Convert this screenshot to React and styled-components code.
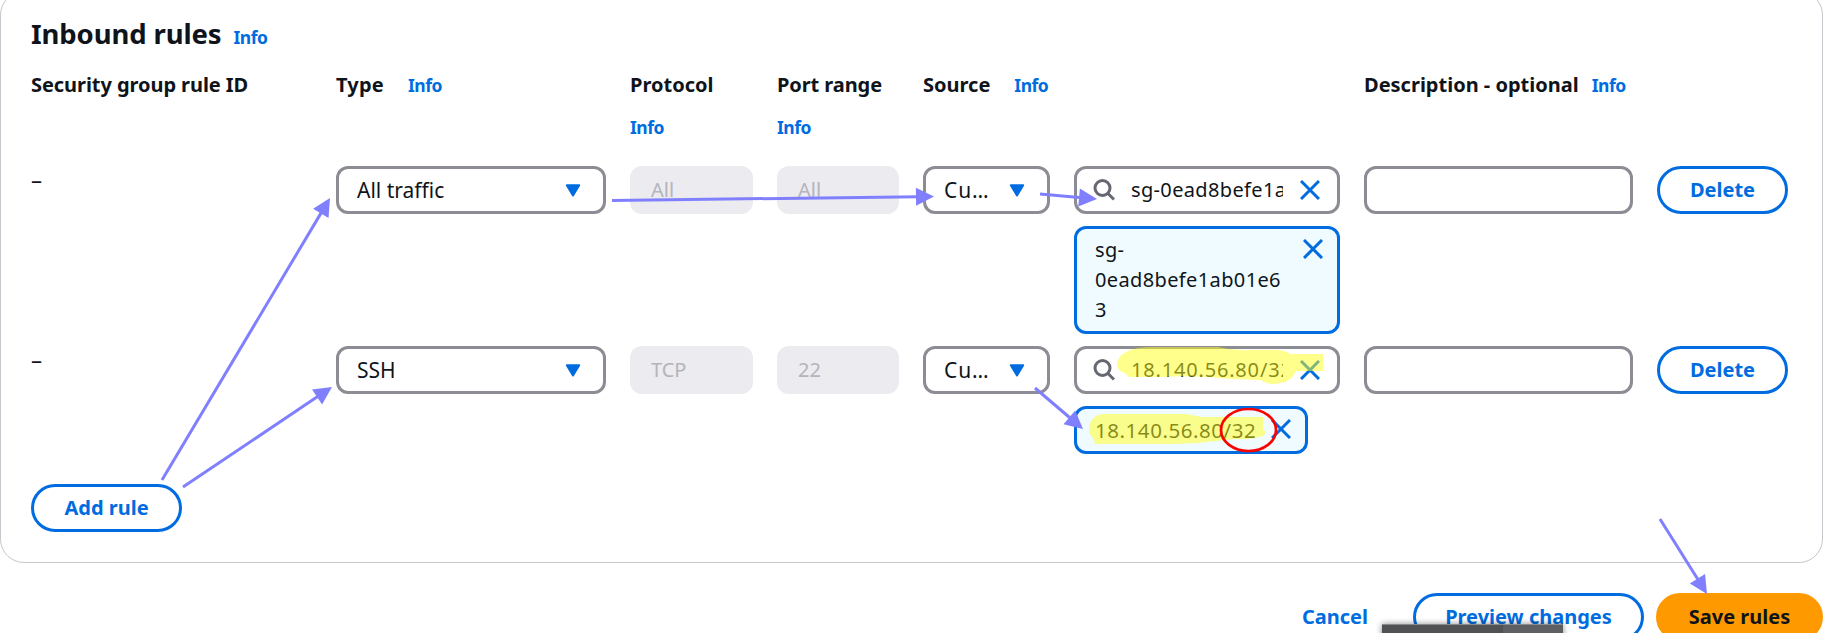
import React from "react";
import styled, { createGlobalStyle } from "styled-components";

const Global = createGlobalStyle`
  html, body { margin: 0; height: 633px; overflow: hidden; background: #fff; }
  * { box-sizing: border-box; }
  body {
    font-family: "Noto Sans", "Open Sans", sans-serif;
    font-size: 20px;
    line-height: 30px;
    color: #0f141a;
  }
`;

const Page = styled.div`
  position: relative;
  width: 1830px;
  height: 633px;
  overflow: hidden;
  display: flex;
  flex-direction: column;
`;

const Panel = styled.section`
  flex: none;
  width: 1823px;
  height: 572px;
  margin-top: -9px;
  padding: 24px 30px 0;
  border: 1px solid #c6c6cd;
  border-radius: 24px;
  display: flex;
  flex-direction: column;
  align-items: flex-start;
`;

const Title = styled.h2`
  margin: 0;
  height: 54px;
  display: flex;
  align-items: baseline;
  gap: 12px;
  font-size: 27.5px;
  line-height: 36px;
  font-weight: 700;
`;

const Label = styled.span`
  font-weight: 700;
  letter-spacing: ${(p) => p.$track || 0}px;
  white-space: nowrap;
`;

const Info = styled.a`
  font-size: 17.5px;
  line-height: 30px;
  font-weight: 700;
  color: #006ce0;
  letter-spacing: -0.5px;
`;

const Grid = styled.div`
  display: grid;
  grid-template-columns: 281px 270px 123px 122px 417px 269px 131px;
  column-gap: 24px;
  align-items: start;
  height: ${(p) => p.$h}px;
`;

const Head = styled.div`
  display: flex;
  flex-direction: ${(p) => (p.$stack ? "column" : "row")};
  align-items: ${(p) => (p.$stack ? "flex-start" : "baseline")};
  column-gap: ${(p) => p.$gap ?? 24}px;
  row-gap: 12px;
`;

const Dash = styled.span`
  font-size: 22px;
  line-height: 27px;
`;

const Field = styled.div`
  height: 48px;
  width: ${(p) => (p.$w ? `${p.$w}px` : "100%")};
  padding: 0 ${(p) => p.$right ?? 22}px 0 ${(p) => p.$left ?? 18}px;
  border: 3px solid ${(p) => (p.$disabled ? "#ebebf0" : "#8c8c94")};
  border-radius: 12px;
  background: ${(p) => (p.$disabled ? "#ebebf0" : "#fff")};
  color: ${(p) => (p.$disabled ? "#b4b4bb" : "#0f141a")};
  font-size: ${(p) => p.$size || 20}px;
  letter-spacing: ${(p) => (p.$track ? `${p.$track}px` : "normal")};
  display: flex;
  align-items: center;
  justify-content: space-between;
`;

const Query = styled.span`
  width: 152px;
  margin-left: 16px;
  margin-right: auto;
  overflow: hidden;
  white-space: nowrap;
  letter-spacing: ${(p) => p.$track}px;
`;

const Source = styled.div`
  display: flex;
  align-items: flex-start;
  gap: 24px;
`;

const Stack = styled.div`
  width: 266px;
  display: flex;
  flex-direction: column;
  align-items: flex-start;
  gap: 12px;
`;

const Token = styled.div`
  width: ${(p) => p.$w}px;
  height: ${(p) => p.$h}px;
  padding: 6px 14px 0 18px;
  border: 3px solid #006ce0;
  border-radius: 12px;
  background: #f0fbff;
  display: flex;
  justify-content: space-between;
  align-items: flex-start;
`;

const TokenText = styled.span`
  width: ${(p) => p.$w}px;
  word-break: break-all;
  font-size: ${(p) => p.$size || 20}px;
  letter-spacing: ${(p) => p.$track}px;
`;

const Button = styled.button`
  flex: none;
  width: ${(p) => p.$w}px;
  height: 48px;
  padding: 0;
  border: ${(p) => (p.$kind === "link" ? "0" : "3px solid")};
  border-color: ${(p) => (p.$kind === "primary" ? "#ff9900" : "#006ce0")};
  border-radius: 24px;
  background: ${(p) => (p.$kind === "primary" ? "#ff9900" : "transparent")};
  color: ${(p) => (p.$kind === "primary" ? "#0f141a" : "#006ce0")};
  font: inherit;
  font-weight: 700;
  text-align: center;
  white-space: nowrap;
`;

const Footer = styled.div`
  width: 1823px;
  margin-top: 30px;
  display: flex;
  justify-content: flex-end;
  gap: 12px;
`;

const Tip = styled.div`
  position: absolute;
  left: 1381.5px;
  top: 624px;
  width: 181px;
  height: 20px;
  border-top: 1px solid #8b8b8b;
  background: linear-gradient(90deg, #505152 0 121px, #5d5f62 121px);
  box-shadow: 0 0 6px rgba(0, 0, 0, 0.45);
`;

const Overlay = styled.svg`
  position: absolute;
  inset: 0;
  pointer-events: none;
`;

const Icon = styled.svg`
  flex: none;
  display: block;
  margin-top: ${(p) => p.$top || 0}px;
`;

const Caret = () => (
  <Icon width="16" height="13" viewBox="0 0 16 13">
    <path d="M1.8 1.3H14.2L8 11.5Z" fill="#006ce0" stroke="#006ce0" strokeWidth="2" strokeLinejoin="round" />
  </Icon>
);

const Close = ({ top }) => (
  <Icon $top={top} width="20" height="20" viewBox="0 0 20 20">
    <path d="M1 1L19 19M19 1L1 19" stroke="#006ce0" strokeWidth="3" />
  </Icon>
);

const Search = () => (
  <Icon width="22" height="22" viewBox="0 0 22 22">
    <circle cx="9.5" cy="9" r="7.5" fill="none" stroke="#656871" strokeWidth="3" />
    <path d="M14.5 14L21 20.5" stroke="#656871" strokeWidth="3" />
  </Icon>
);

function Arrow({ from: [x1, y1], to: [x2, y2] }) {
  const len = Math.hypot(x2 - x1, y2 - y1);
  const angle = (Math.atan2(y2 - y1, x2 - x1) * 180) / Math.PI;
  return (
    <g transform={`translate(${x1} ${y1}) rotate(${angle})`}>
      <path d={`M0 0H${len - 15}`} stroke="#8080ff" strokeWidth="3" />
      <path d={`M${len} 0L${len - 18} -9V9Z`} fill="#8080ff" />
    </g>
  );
}

function Rule({ type, protocol, port, query, track, height, children }) {
  return (
    <Grid $h={height}>
      <Dash>–</Dash>
      <Field $size={21}>{type}<Caret /></Field>
      <Field $disabled>{protocol}</Field>
      <Field $disabled>{port}</Field>
      <Source>
        <Field $w={127} $size={21} $track={0.9}>Cu…<Caret /></Field>
        <Stack>
          <Field $left={16} $right={17}>
            <Search />
            <Query $track={track}>{query}</Query>
            <Close />
          </Field>
          {children}
        </Stack>
      </Source>
      <Field />
      <Button $w={131}>Delete</Button>
    </Grid>
  );
}

export default function App() {
  return (
    <Page>
      <Global />
      <Panel>
        <Title>
          <Label $track={-0.12}>Inbound rules</Label>
          <Info>Info</Info>
        </Title>
        <Grid $h={96}>
          <Head><Label $track={-0.06}>Security group rule ID</Label></Head>
          <Head><Label $track={0.2}>Type</Label><Info>Info</Info></Head>
          <Head $stack><Label>Protocol</Label><Info>Info</Info></Head>
          <Head $stack><Label $track={-0.08}>Port range</Label><Info>Info</Info></Head>
          <Head><Label>Source</Label><Info>Info</Info></Head>
          <Head $gap={13}><Label>Description - optional</Label><Info>Info</Info></Head>
        </Grid>
        <Rule type="All traffic" protocol="All" port="All" query="sg-0ead8befe1ab01e63" track={0.35} height={180}>
          <Token $w={266} $h={108}>
            <TokenText $w={193} $track={0.37}>sg-<br />0ead8befe1ab01e63</TokenText>
            <Close top={4} />
          </Token>
        </Rule>
        <Rule type="SSH" protocol="TCP" port="22" query="18.140.56.80/32" track={0.82} height={138}>
          <Token $w={234} $h={48}>
            <TokenText $w={170} $size={20.5} $track={0.55}>18.140.56.80/32</TokenText>
            <Close top={4} />
          </Token>
        </Rule>
        <Button $w={151}>Add rule</Button>
      </Panel>
      <Footer>
        <Button $kind="link" $w={132}>Cancel</Button>
        <Button $w={231}>Preview changes</Button>
        <Button $kind="primary" $w={167}>Save rules</Button>
      </Footer>
      <Tip />
      <Overlay width="1830" height="633" viewBox="0 0 1830 633">
        <g fill="#ffff1a" fillOpacity="0.5">
          <path d="M1117 364Q1118 355 1128 351Q1137 347 1152 347H1218Q1234 351 1250 350H1275Q1286 350 1290 354H1323V371H1296Q1291 382 1280 383Q1270 386 1260 380L1232 379Q1195 375 1160 377H1129Q1125 372 1120 371Q1117 368 1117 364Z" />
          <path d="M1089 429Q1090 416 1102 414H1186L1202 417H1263V430Q1268 431 1263 436Q1250 440 1235 439Q1215 441 1197 443L1175 444H1095Q1094 438 1091 436Q1089 433 1089 429Z" />
        </g>
        <Arrow from={[162, 480]} to={[330, 198]} />
        <Arrow from={[183, 487]} to={[332, 387]} />
        <Arrow from={[612, 200.5]} to={[934, 196.5]} />
        <Arrow from={[1040, 194]} to={[1097, 199]} />
        <Arrow from={[1035, 388]} to={[1083, 429]} />
        <Arrow from={[1660, 519]} to={[1707, 594]} />
        <ellipse cx="1248.5" cy="430" rx="27.5" ry="21" fill="none" stroke="#ff0000" strokeWidth="2.7" />
      </Overlay>
    </Page>
  );
}
